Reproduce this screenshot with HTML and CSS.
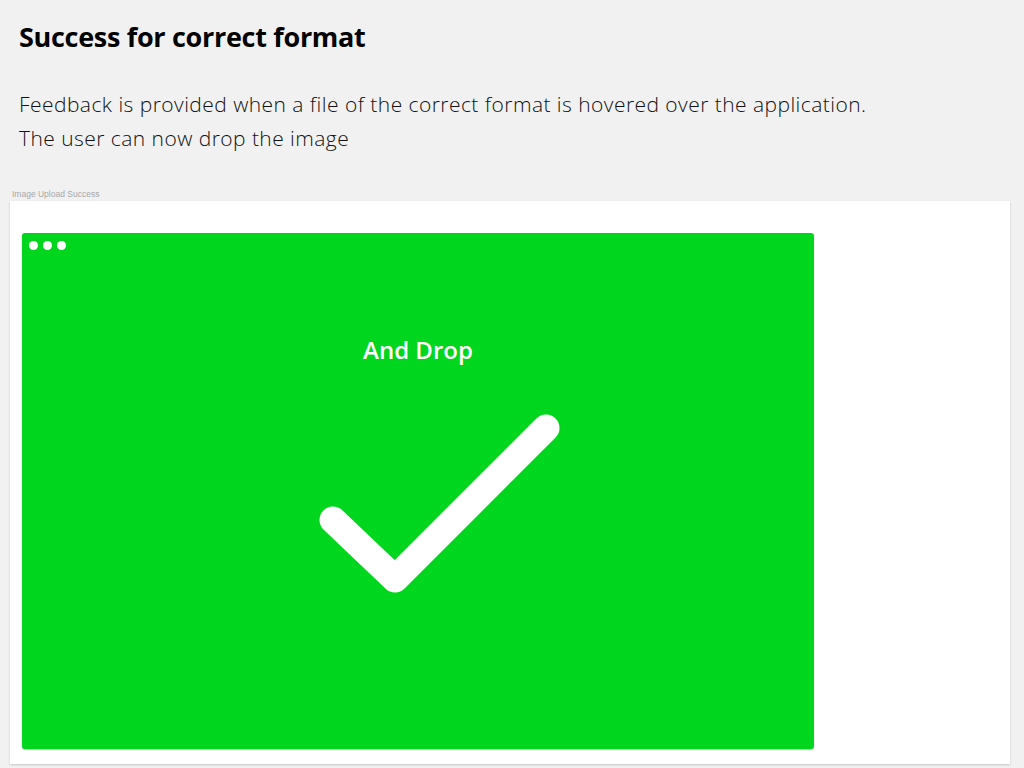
FILE: index.html
```html
<!DOCTYPE html>
<html>
<head>
<meta charset="utf-8">
<link rel="stylesheet" href="styles.css">
</head>
<body>
<header class="intro">
  <h1 class="title">Success for correct format</h1>
  <p class="desc">Feedback is provided when a file of the correct format is hovered over the application.<br>The user can now drop the image</p>
</header>
<section class="artboard">
  <div class="artboard-label">Image Upload Success</div>
  <div class="card">
    <div class="window">
      <div class="dots"><span class="dot"></span><span class="dot"></span><span class="dot"></span></div>
      <div class="drop-text">And Drop</div>
      <svg class="check" width="264" height="204" viewBox="0 0 264 204">
        <polyline points="22,116 84,175 235,24" fill="none" stroke="#fff" stroke-width="27" stroke-linecap="round" stroke-linejoin="round"/>
      </svg>
    </div>
  </div>
</section>
</body>
</html>
```

FILE: styles.css
```css
html, body {
  margin: 0;
  padding: 0;
  background: #f1f1f1;
}
body {
  font-family: "Open Sans", "Noto Sans", sans-serif;
  color: #000;
  width: 1024px;
  height: 768px;
  overflow: hidden;
}
.intro {
  padding: 18px 19px 0 19px;
}
.title {
  margin: 0;
  font-size: 27px;
  font-weight: 700;
  line-height: 38px;
  letter-spacing: -0.3px;
}
.desc {
  margin: 31px 0 0 0;
  font-size: 21px;
  font-weight: 300;
  line-height: 34px;
  letter-spacing: 0.45px;
  color: #111;
}
.artboard {
  padding: 0 14px 0 10px;
  margin-top: 35px;
}
.artboard-label {
  font-family: "Liberation Sans", sans-serif;
  font-size: 8.5px;
  color: #a8a8a8;
  padding-left: 2px;
  height: 11px;
  line-height: 9px;
}
.card {
  background: #fff;
  box-shadow: 0 1px 2px rgba(0,0,0,0.18);
  padding: 32px 196px 15px 12px;
  height: 563px;
  box-sizing: border-box;
}
.window {
  position: relative;
  background: #00d61d;
  border-radius: 3px;
  box-shadow: 0 1px 1px rgba(0,0,0,0.25);
  height: 516px;
  display: flex;
  flex-direction: column;
  align-items: center;
}
.dots {
  position: absolute;
  left: 7px;
  top: 8px;
  display: flex;
  gap: 5px;
}
.dot {
  width: 9px;
  height: 9px;
  border-radius: 50%;
  background: #fff;
}
.drop-text {
  margin-top: 101px;
  color: #fff;
  font-size: 24px;
  font-weight: 600;
  line-height: 32px;
}
.check {
  margin-top: 38px;
  margin-left: 50px;
}
```
